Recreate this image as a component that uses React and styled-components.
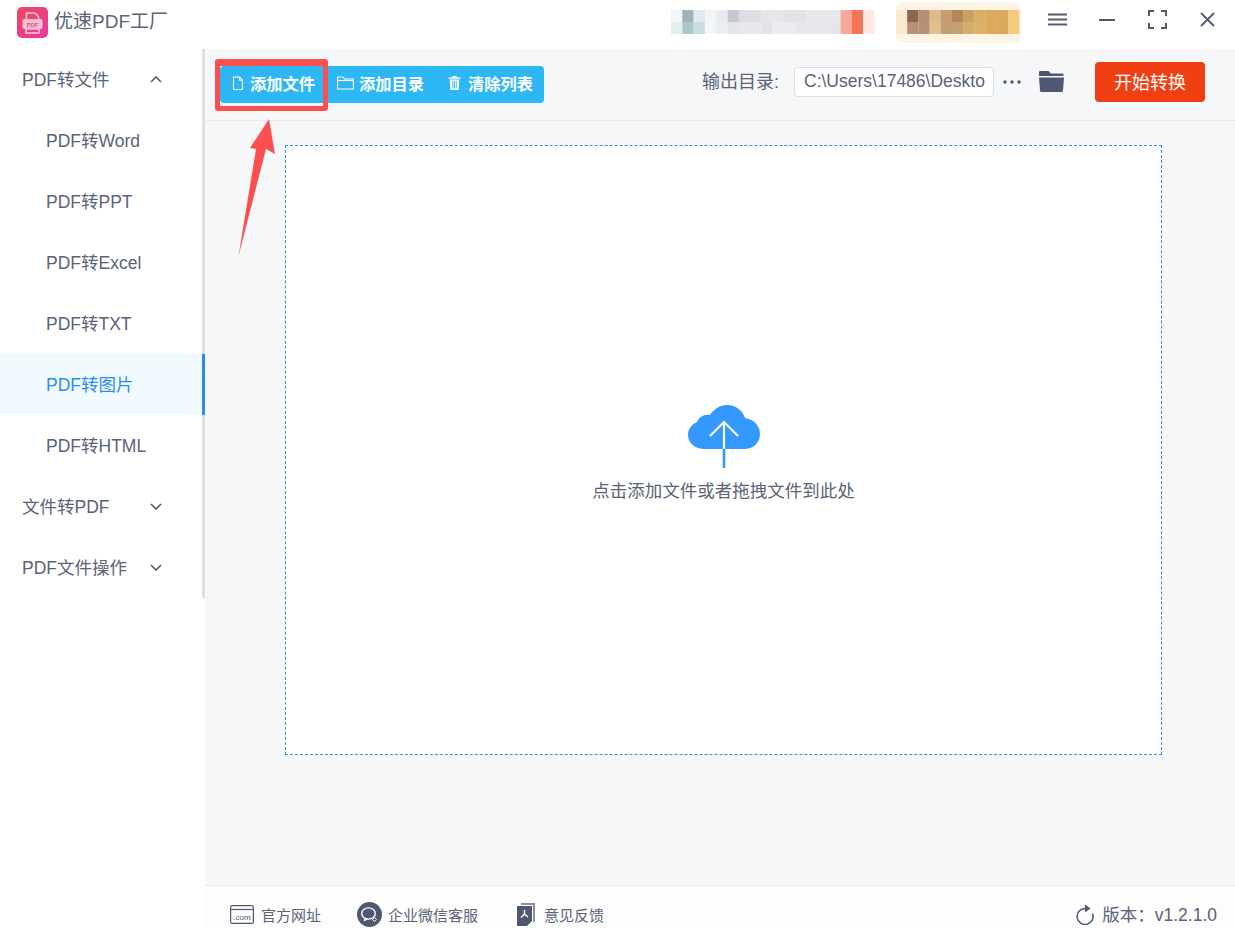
import React from 'react';
import styled, { createGlobalStyle } from 'styled-components';

const GlobalStyle = createGlobalStyle`
  html, body {
    margin: 0;
    padding: 0;
    background: #fff;
    font-family: "Liberation Sans", "Noto Sans CJK SC", sans-serif;
  }
  * {
    box-sizing: border-box;
  }
`;

const textColor = '#5a6377';

const Page = styled.div`
  position: relative;
  width: 1235px;
  height: 929px;
  overflow: hidden;
  color: ${textColor};
`;

const TitleBar = styled.header`
  display: flex;
  align-items: center;
  height: 49px;
  padding: 0 0 10px 17px;
  background: #fff;
`;

const LogoMark = styled.svg`
  margin-top: 6px;
  flex-shrink: 0;
`;

const AppName = styled.span`
  margin-left: 6px;
  font-size: 19px;
  color: ${textColor};
`;

const Mosaic = styled.svg`
  margin-top: 7px;
  margin-left: auto;
  margin-right: 27px;
  flex-shrink: 0;
`;

const WindowButton = styled.button`
  display: flex;
  align-items: center;
  justify-content: center;
  width: ${props => props.$width}px;
  height: 24px;
  margin-right: ${props => props.$gap}px;
  padding: 0;
  border: 0;
  background: none;
  color: #515a6e;
`;

const Body = styled.div`
  display: flex;
  height: 880px;
`;

const Sidebar = styled.nav`
  width: 205px;
  flex-shrink: 0;
  background: #fff;
`;

const MenuRow = styled.div`
  display: flex;
  align-items: center;
  height: 61px;
  padding-left: ${props => (props.$child ? 46 : 22)}px;
  padding-bottom: 2px;
  font-size: 17.5px;
  color: ${props => (props.$active ? '#2d8cf0' : textColor)};
  background: ${props => (props.$active ? '#f0faff' : '#fff')};
  border-right: 3px solid ${props => (props.$active ? '#2d8cf0' : '#dddfe2')};
`;

const Chevron = styled.svg`
  position: absolute;
  left: 150px;
  top: 27px;
`;

const MenuHead = styled(MenuRow)`
  position: relative;
`;

const Main = styled.main`
  display: flex;
  flex-direction: column;
  flex: 1;
  min-width: 0;
  background: #f5f7f9;
`;

const Toolbar = styled.div`
  display: flex;
  align-items: center;
  flex-shrink: 0;
  height: 72px;
  padding: 0 30px 6px 15px;
  border-bottom: 1px solid #e8eaec;
`;

const ButtonGroup = styled.div`
  display: flex;
  align-items: center;
  height: 37px;
  margin-top: 6px;
  background: #2db7f5;
  border-radius: 4px;
`;

const ToolButton = styled.button`
  display: flex;
  align-items: center;
  gap: ${props => props.$gap}px;
  height: 37px;
  width: ${props => props.$width}px;
  padding: 0 0 3px ${props => props.$pad}px;
  border: 0;
  background: none;
  color: #fff;
  font: 600 16.25px "Liberation Sans", "Noto Sans CJK SC", sans-serif;
`;

const OutputLabel = styled.span`
  margin-left: auto;
  margin-right: 15px;
  padding-bottom: 3px;
  font-size: 18px;
  color: ${textColor};
`;

const PathInput = styled.div`
  width: 200px;
  height: 30px;
  padding-left: 9px;
  overflow: hidden;
  background: #fff;
  border: 1px solid #dcdee2;
  border-radius: 4px;
  font-size: 17.5px;
  line-height: 27px;
  white-space: nowrap;
  color: ${textColor};
`;

const Dots = styled.svg`
  margin-left: 9px;
`;

const FolderIcon = styled.svg`
  margin-left: 18px;
`;

const StartButton = styled.button`
  width: 110px;
  height: 40px;
  margin-left: 31px;
  padding: 0 0 2px;
  border: 0;
  border-radius: 4px;
  background: #f03f13;
  color: #fff;
  font: 18px "Liberation Sans", "Noto Sans CJK SC", sans-serif;
`;

const Content = styled.section`
  flex-shrink: 0;
  height: 764px;
  padding: 24px 73px 0 80px;
`;

const DropZone = styled.div`
  display: flex;
  flex-direction: column;
  align-items: center;
  height: 610px;
  padding-top: 259px;
  background: #fff;
  border: 1px dashed #2d8cf0;
`;

const DropText = styled.p`
  margin: 12px 0 0;
  font-size: 17.5px;
  line-height: 22px;
  color: ${textColor};
`;

const Footer = styled.footer`
  display: flex;
  align-items: center;
  flex-shrink: 0;
  height: 60px;
  padding: 0 18px 2px 25px;
  background: #fdfdfd;
  border-top: 1px solid #e8eaec;
`;

const FooterLink = styled.div`
  display: flex;
  align-items: center;
  gap: ${props => props.$gap}px;
  margin-right: ${props => props.$after}px;
  font-size: 15px;
  color: ${textColor};
`;

const Version = styled.div`
  display: flex;
  align-items: center;
  gap: 8px;
  margin-left: auto;
  font-size: 17.5px;
  color: ${textColor};
`;

const VersionText = styled.span`
  padding-bottom: 3px;
`;

const RedFrame = styled.div`
  position: absolute;
  left: 215px;
  top: 59px;
  width: 113px;
  height: 52px;
  border: 5px solid #fc4f4f;
  border-top-width: 7px;
  border-radius: 3px;

  &::after {
    content: '';
    position: absolute;
    left: 0;
    right: 0;
    bottom: 0;
    height: 3px;
    background: #f5f9fb;
  }
`;

const RedArrow = styled.svg`
  position: absolute;
  left: 230px;
  top: 112px;
`;

const menu = [
  { label: 'PDF转文件', open: true },
  { label: 'PDF转Word', child: true },
  { label: 'PDF转PPT', child: true },
  { label: 'PDF转Excel', child: true },
  { label: 'PDF转TXT', child: true },
  { label: 'PDF转图片', child: true, active: true },
  { label: 'PDF转HTML', child: true },
  { label: '文件转PDF' },
  { label: 'PDF文件操作' },
];

const mosaicRows = [
  ['#f2f5f6', '#9fb3ba', '#e4eaec', '#f3f4f6', '#e9ebee', '#c4c8d0', '#dcdee3', '#dcdee3', '#e5e6ea', '#e5e6ea', '#e1e3e7', '#e1e3e7', '#e6e7ea', '#e6e7ea', '#e6e7ea', '#f7a898', '#f47755', '#fde8e4'],
  ['#e3eeee', '#a9c7c8', '#c8dddd', '#f3f5f7', '#ebedf0', '#e3e5e9', '#e6e7ea', '#e6e7ea', '#e1e3e7', '#ebecef', '#ebecef', '#e6e7ea', '#e6e7ea', '#e6e7ea', '#e3e5e9', '#f7a898', '#f47755', '#fde8e4'],
];

const warmRows = [
  ['#fbe9cf', '#8f6450', '#b58f73', '#ddbc8b', '#c49c6f', '#b58555', '#caa061', '#d9ae65', '#dcaa5a', '#dcaa5a', '#f2cb80'],
  ['#fbe9cf', '#b69178', '#b69178', '#dfc08e', '#c49e72', '#c6a070', '#d3ad6b', '#dcb065', '#dcaa5a', '#dcaa5a', '#f2cb80'],
];

const Logo = () => (
  <LogoMark width="31" height="31" viewBox="0 0 31 31">
    <defs>
      <linearGradient id="logoFill" x1="0" y1="0" x2="1" y2="1">
        <stop offset="0" stopColor="#ee4763" />
        <stop offset="1" stopColor="#ec3a9c" />
      </linearGradient>
    </defs>
    <rect width="31" height="31" rx="5" fill="url(#logoFill)" />
    <path d="M9.5 12V6h8.500l3.500 3.500V12" fill="none" stroke="#f9c3d3" strokeWidth="1.600" />
    <rect x="5.500" y="12" width="20" height="10" rx="2" fill="#f9c3d3" />
    <rect x="9" y="22" width="13" height="4" fill="none" stroke="#f9c3d3" strokeWidth="1.600" />
    <text x="15.500" y="20" fontSize="6" fontWeight="700" textAnchor="middle" fill="#ec4a7c" fontFamily="Liberation Sans">PDF</text>
  </LogoMark>
);

const FileGlyph = () => (
  <svg width="12" height="15" viewBox="0 0 12 15" fill="none" stroke="#fff" strokeWidth="1.100">
    <path d="M1.500 1h6l3 3.200v9.300h-9z" />
    <path d="M7.500 1v3.200h3" />
  </svg>
);

const DirGlyph = () => (
  <svg width="17" height="14" viewBox="0 0 17 14" fill="none" stroke="#fff" strokeWidth="1.100">
    <path d="M.6 1h5.500l1.500 2h8.800v10H.6z" />
    <path d="M.6 4.500h16" />
  </svg>
);

const TrashGlyph = () => (
  <svg width="13" height="14" viewBox="0 0 13 14" fill="#fff">
    <path d="M4.500 0h4l.5 1.500h3.500v1.200H.5V1.500H4z" />
    <path d="M1.700 3.500h9.600l-.7 10.500H2.400zM4.400 5v7.500h.9V5zm1.700 0v7.500H7V5zm1.700 0v7.500h.9V5z" fillRule="evenodd" />
  </svg>
);

const App = () => (
  <Page>
    <GlobalStyle />
    <TitleBar>
      <Logo />
      <AppName>优速PDF工厂</AppName>
      <Mosaic width="350" height="44" viewBox="0 0 350 44">
        <rect x="225" y="1" width="125" height="41" rx="8" fill="#fdf4e6" />
        {mosaicRows.map((row, r) =>
          row.map((fill, c) => (
            <rect key={`a${r}-${c}`} x={c * 11.3} y={9 + r * 12} width="11.4" height="12" fill={fill} />
          ))
        )}
        {warmRows.map((row, r) =>
          row.map((fill, c) => (
            <rect key={`b${r}-${c}`} x={225 + c * 11.2} y={9 + r * 12} width="11.3" height="12" fill={fill} />
          ))
        )}
      </Mosaic>
      <WindowButton $width={19} $gap={32} aria-label="菜单">
        <svg width="19" height="13" viewBox="0 0 19 13" stroke="currentColor" strokeWidth="2">
          <path d="M0 1.500h19M0 6.500h19M0 11.500h19" />
        </svg>
      </WindowButton>
      <WindowButton $width={16} $gap={33} aria-label="最小化">
        <svg width="16" height="2" viewBox="0 0 16 2" stroke="currentColor" strokeWidth="2">
          <path d="M0 1h16" />
        </svg>
      </WindowButton>
      <WindowButton $width={19} $gap={33} aria-label="最大化">
        <svg width="19" height="19" viewBox="0 0 19 19" fill="none" stroke="currentColor" strokeWidth="2">
          <path d="M1 6V1h5M13 1h5v5M18 13v5h-5M6 18H1v-5" />
        </svg>
      </WindowButton>
      <WindowButton $width={15} $gap={20} aria-label="关闭">
        <svg width="15" height="15" viewBox="0 0 15 15" stroke="currentColor" strokeWidth="1.800">
          <path d="M1 1l13 13M14 1L1 14" />
        </svg>
      </WindowButton>
    </TitleBar>

    <Body>
      <Sidebar>
        {menu.map(item =>
          item.child ? (
            <MenuRow key={item.label} $child $active={item.active}>
              {item.label}
            </MenuRow>
          ) : (
            <MenuHead key={item.label}>
              {item.label}
              <Chevron width="12" height="7" viewBox="0 0 12 7" fill="none" stroke="#515a6e" strokeWidth="1.600">
                <path d={item.open ? 'M1 6l5-5 5 5' : 'M1 1l5 5 5-5'} />
              </Chevron>
            </MenuHead>
          )
        )}
      </Sidebar>

      <Main>
        <Toolbar>
          <ButtonGroup>
            <ToolButton $width={108} $pad={12} $gap={6}><FileGlyph />添加文件</ToolButton>
            <ToolButton $width={109} $pad={9} $gap={5}><DirGlyph />添加目录</ToolButton>
            <ToolButton $width={107} $pad={11} $gap={7}><TrashGlyph />清除列表</ToolButton>
          </ButtonGroup>
          <OutputLabel>输出目录:</OutputLabel>
          <PathInput>C:\Users\17486\Deskto</PathInput>
          <Dots width="18" height="4" viewBox="0 0 18 4" fill="#515a6e">
            <circle cx="2" cy="2" r="1.700" />
            <circle cx="9" cy="2" r="1.700" />
            <circle cx="16" cy="2" r="1.700" />
          </Dots>
          <FolderIcon width="25" height="21" viewBox="0 0 25 21" fill="#4f5870">
            <path d="M1 0h8.500l2.500 2.500h11.500A1 1 0 0 1 24.500 3.500V5H0V1a1 1 0 0 1 1-1z" />
            <path d="M0 6.500h25L24 19.500a1.500 1.500 0 0 1-1.500 1.500h-20A1.500 1.500 0 0 1 1 19.500z" />
          </FolderIcon>
          <StartButton>开始转换</StartButton>
        </Toolbar>

        <Content>
          <DropZone>
            <svg width="74" height="63" viewBox="0 0 74 63">
              <path
                d="M18 44C8 44 1 38 1 30c0-6 4-11 9-13 2-5 7-8 13-7C27 4 33 0 40 0c9 0 16 6 18 13 9 1 15 8 15 16 0 9-7 15-16 15z"
                fill="#3399ff"
              />
              <path d="M37 17V44" stroke="#fff" strokeWidth="2.200" />
              <path d="M37 44V63" stroke="#3399ff" strokeWidth="2.600" />
              <path d="M23 31L37 17l14 14" fill="none" stroke="#fff" strokeWidth="2.200" />
            </svg>
            <DropText>点击添加文件或者拖拽文件到此处</DropText>
          </DropZone>
        </Content>

        <Footer>
          <FooterLink $gap={7} $after={36}>
            <svg width="24" height="19" viewBox="0 0 24 19" fill="none" stroke="#515a6e" strokeWidth="1.200">
              <rect x=".6" y=".6" width="22.800" height="17.800" rx="1.500" />
              <path d="M.6 4.500h22.800" />
              <text x="12" y="15" fontSize="8" textAnchor="middle" fill="#515a6e" stroke="none" fontFamily="Liberation Sans">.com</text>
            </svg>
            官方网址
          </FooterLink>
          <FooterLink $gap={6} $after={39}>
            <svg width="25" height="25" viewBox="0 0 25 25">
              <circle cx="12.500" cy="12.500" r="12.500" fill="#4f5870" />
              <ellipse cx="11.500" cy="11.500" rx="6.800" ry="5.600" fill="none" stroke="#fff" strokeWidth="1.400" />
              <path d="M8 16l-.5 2.500 3-1.500" fill="none" stroke="#fff" strokeWidth="1.200" />
              <path d="M17.500 15.500l2 2-2 2-2-2z" fill="none" stroke="#fff" strokeWidth="1" />
            </svg>
            企业微信客服
          </FooterLink>
          <FooterLink $gap={9} $after={0}>
            <svg width="18" height="23" viewBox="0 0 18 23">
              <path d="M4 0h14v19h-2V2H4z" fill="#8b91a1" />
              <path d="M0 3h15v15l-5 5H0z" fill="#4f5870" />
              <path d="M7.500 7v4M7.500 11l-3.500 3.500M7.500 11l3.500 3" fill="none" stroke="#fff" strokeWidth="1.400" />
            </svg>
            意见反馈
          </FooterLink>
          <Version>
            <svg width="18" height="21" viewBox="0 0 18 21" fill="none" stroke="#515a6e" strokeWidth="1.500">
              <path d="M9 4.500A8 8 0 1 0 16.500 9.500" />
              <path d="M9 0.500l5.500 4L9 8.500z" fill="#515a6e" stroke="none" />
            </svg>
            <VersionText>版本：v1.2.1.0</VersionText>
          </Version>
        </Footer>
      </Main>
    </Body>

    <RedFrame />
    <RedArrow width="50" height="145" viewBox="0 0 50 145">
      <path d="M39 7L45 42 36 37 8.500 144 26 37 20 36z" fill="#fc4f4f" />
    </RedArrow>
  </Page>
);

export default App;
